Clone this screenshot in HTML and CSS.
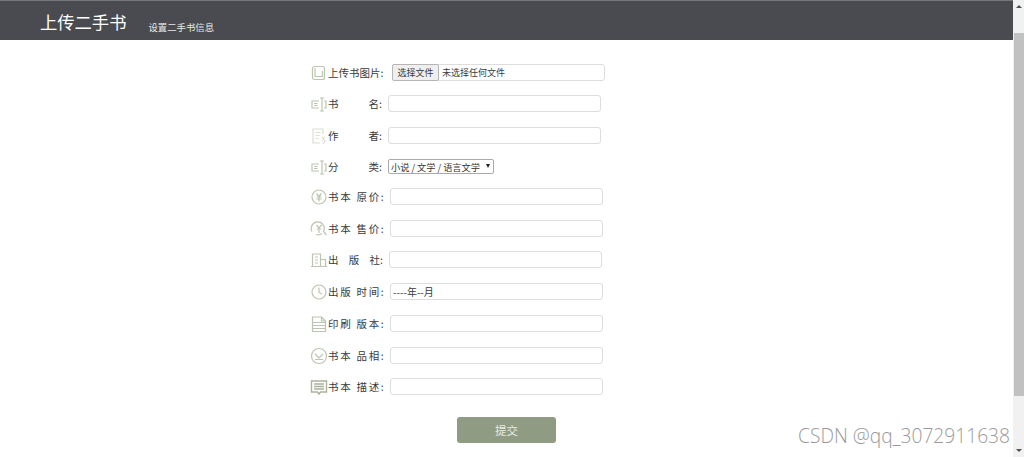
FILE: index.html
```html
<!DOCTYPE html>
<html>
  <head>
    <meta charset="utf-8">
    <link rel="stylesheet" href="styles.css">
  </head>

  <body>
    <div class="page">
      <header class="top-bar">
        <h1>上传二手书</h1>
        <span class="sub-title">设置二手书信息</span>
      </header>

      <form class="book-form">
        <div class="form-row row-tight">
          <svg class="icon" viewBox="0 0 18 18"><rect x="2.500" y="2.500" width="12" height="13" rx="2"/><path d="M5 4v8.500h7.500V7"/></svg>
          <label class="label label-file">上传书图片:</label>
          <div class="file-box">
            <span class="file-btn">选择文件</span>
            <span class="file-name">未选择任何文件</span>
          </div>
        </div>

        <div class="form-row">
          <svg class="icon" viewBox="0 0 18 18"><path d="M9 6H2v7h7M4 8.500h3.500M4 10.500h3.500M10 3h4M10 16h4M12 3v13M14 6h2v7h-2"/></svg>
          <label class="label label-short label-spread"><span>书</span><span>名:</span></label>
          <input class="field" type="text">
        </div>

        <div class="form-row row-tight">
          <svg class="icon icon-pale" viewBox="0 0 18 18"><path d="M13 7V2H3v14h7M5.500 5.500h5M5.500 8.500h4M5.500 11.500h3M12 10l3 4-2 3M15 10l-3 4"/></svg>
          <label class="label label-short label-spread"><span>作</span><span>者:</span></label>
          <input class="field" type="text">
        </div>

        <div class="form-row row-tighter">
          <svg class="icon" viewBox="0 0 18 18"><path d="M9 6H2v7h7M4 8.500h3.500M4 10.500h3.500M10 3h4M10 16h4M12 3v13M14 6h2v7h-2"/></svg>
          <label class="label label-short label-spread"><span>分</span><span>类:</span></label>
          <span class="picker-wrap">
            <select class="picker">
              <option>小说 / 文学 / 语言文学</option>
            </select>
          </span>
        </div>

        <div class="form-row">
          <svg class="icon" viewBox="0 0 18 18"><circle cx="9" cy="9" r="7"/><path d="M6.500 5.500L9 8.500l2.500-3M6.500 9h5M6.500 11h5M9 8.500V13.500"/></svg>
          <label class="label label-wide label-gap">书本 原价:</label>
          <input class="field" type="text">
        </div>

        <div class="form-row row-tight">
          <svg class="icon" viewBox="0 0 18 18"><path d="M2 11.500a6.500 6.500 0 1 1 11.500 0l3 3.500M2 11.500L1 10M6 14.500a6.500 6.500 0 0 0 6 -1"/><path d="M6.500 5L9 8l2.500-3M6.500 9h5M9 8v5"/></svg>
          <label class="label label-wide label-gap">书本 售价:</label>
          <input class="field" type="text">
        </div>

        <div class="form-row">
          <svg class="icon" viewBox="0 0 18 18"><path d="M1 15.500h16M2.500 15.500V3h8v12.500M10.500 8.500h5v7M5 6h3M5 9h3M5 12h3"/></svg>
          <label class="label label-mid label-spread label-three"><span>出</span><span>版</span><span>社:</span></label>
          <input class="field" type="text">
        </div>

        <div class="form-row">
          <svg class="icon" viewBox="0 0 18 18"><circle cx="9" cy="9" r="7"/><path d="M9 4.500V9.500l3 1.500"/></svg>
          <label class="label label-wide label-gap">出版 时间:</label>
          <input class="field field-date" type="text" value="----年--月">
        </div>

        <div class="form-row">
          <svg class="icon" viewBox="0 0 18 18"><path d="M2.500 2h9l4 4v10.500h-13zM11.500 2v4h4M2.500 7.500h13M2.500 10.500h13M2.500 13.500h13"/></svg>
          <label class="label label-wide label-gap">印刷 版本:</label>
          <input class="field" type="text">
        </div>

        <div class="form-row row-tight">
          <svg class="icon" viewBox="0 0 18 18"><circle cx="9" cy="9" r="7.500"/><path d="M5 7l4 4 4-4M5 12.500h8"/></svg>
          <label class="label label-wide label-gap">书本 品相:</label>
          <input class="field" type="text">
        </div>

        <div class="form-row">
          <svg class="icon icon-strong" viewBox="0 0 18 18"><path d="M1.500 3h15v11h-6L9 16l-1.500-2h-6zM4 6h10M4 8.500h10M4 11h10"/></svg>
          <label class="label label-wide label-gap">书本 描述:</label>
          <input class="field" type="text">
        </div>

        <button class="submit-btn" type="button">提交</button>
      </form>
    </div>

    <!-- scrollbar and watermark sit on top of the page -->
    <div class="scroll-track">
      <span class="arrow arrow-up"></span>
      <span class="scroll-thumb"></span>
      <span class="arrow arrow-down"></span>
    </div>
    <div class="watermark">CSDN @qq_3072911638</div>
  </body>
</html>
```

FILE: styles.css
```css
html,
body {
  margin: 0;
  height: 100%;
  overflow: hidden;
  background-color: #fff;
}

body {
  font-family: "Noto Sans CJK SC", "Liberation Sans", sans-serif;
  color: #3a3a3a;
}

.page {
  width: 1013px;
}

.top-bar {
  display: flex;
  align-items: flex-start;
  height: 39px;
  padding-left: 40px;
  background-color: #4a4b50;
  border-top: 1px solid #77787b;
}

.top-bar h1 {
  margin: 0;
  font-size: 17.300px;
  font-weight: 400;
  line-height: 42px;
  color: #fff;
}

.sub-title {
  margin: 19px 0 0 22px;
  font-size: 9.400px;
  line-height: 14px;
  color: #e8e8e8;
}

.book-form {
  display: flex;
  flex-direction: column;
  padding: 24px 0 0 310px;
}

.form-row {
  display: flex;
  align-items: center;
  height: 17px;
  margin-bottom: 15px;
}

.row-tight {
  margin-bottom: 14px;
}

.row-tighter {
  margin-bottom: 13px;
}

.icon {
  flex: none;
  width: 18px;
  height: 18px;
  fill: none;
  stroke: #bcc5b1;
  stroke-width: 1.200;
}

.icon-pale {
  stroke: #dadfd3;
}

.icon-strong {
  stroke: #a9b39c;
  stroke-width: 1.400;
}

.label {
  flex: none;
  font-size: 10.500px;
  white-space: nowrap;
}

.label-file {
  width: 64px;
}

.label-short {
  width: 60px;
}

.label-mid {
  width: 61px;
}

.label-wide {
  width: 62px;
}

.label-gap {
  letter-spacing: 1.700px;
}

.label-spread {
  display: flex;
  justify-content: space-between;
  box-sizing: border-box;
  padding-right: 6px;
}

.field,
.file-box {
  box-sizing: border-box;
  width: 213px;
  height: 17px;
  margin: 0;
  padding: 0 3px;
  border: 1px solid #ddd;
  border-radius: 3px;
  background-color: #fff;
  font-family: inherit;
  font-size: 10px;
  color: #3a3a3a;
}

.field-date {
  padding: 0 2px;
}

.file-box {
  display: flex;
  align-items: center;
  padding: 0;
}

.file-btn {
  box-sizing: border-box;
  flex: none;
  width: 47px;
  height: 17px;
  margin-left: -1px;
  line-height: 15px;
  text-align: center;
  background-color: #efefef;
  border: 1px solid #b5b5b5;
  border-radius: 2px;
  font-size: 9px;
}

.file-name {
  margin-left: 3px;
  font-size: 9px;
}

.picker-wrap {
  position: relative;
  display: block;
  width: 106px;
  height: 15px;
}

/* native arrow is too big here, so draw the small one */
.picker-wrap::after {
  content: "";
  position: absolute;
  top: 5px;
  right: 4px;
  border-left: 2.500px solid transparent;
  border-right: 2.500px solid transparent;
  border-top: 4px solid #222;
}

.picker {
  display: block;
  box-sizing: border-box;
  width: 100%;
  height: 15px;
  margin: 0;
  padding: 0 0 0 2px;
  border: 1px solid #aaa;
  border-radius: 2px;
  background-color: #fff;
  font-family: inherit;
  font-size: 9.200px;
  color: #333;
  appearance: none;
}

.submit-btn {
  align-self: flex-start;
  width: 99px;
  height: 26px;
  margin: 7px 0 0 147px;
  padding: 0;
  border: none;
  border-radius: 3px;
  background-color: #8f9b83;
  font-family: inherit;
  font-size: 11.500px;
  color: #e8ebe3;
}

.scroll-track {
  position: absolute;
  top: 0;
  right: 0;
  bottom: 0;
  width: 11px;
  background-color: #f1f1f1;
}

.scroll-thumb {
  position: absolute;
  top: 33px;
  left: 1px;
  width: 10px;
  height: 363px;
  background-color: #c1c1c1;
}

.arrow {
  position: absolute;
  left: 3px;
  width: 0;
  height: 0;
  border-left: 3px solid transparent;
  border-right: 3px solid transparent;
}

.arrow-up {
  top: 5px;
  border-bottom: 3px solid #505050;
}

.arrow-down {
  bottom: 5px;
  border-top: 3px solid #505050;
}

.watermark {
  position: absolute;
  right: 14px;
  bottom: 8px;
  font-family: "Open Sans", sans-serif;
  font-size: 19.200px;
  font-weight: 300;
  line-height: 26px;
  color: #999;
}
```
